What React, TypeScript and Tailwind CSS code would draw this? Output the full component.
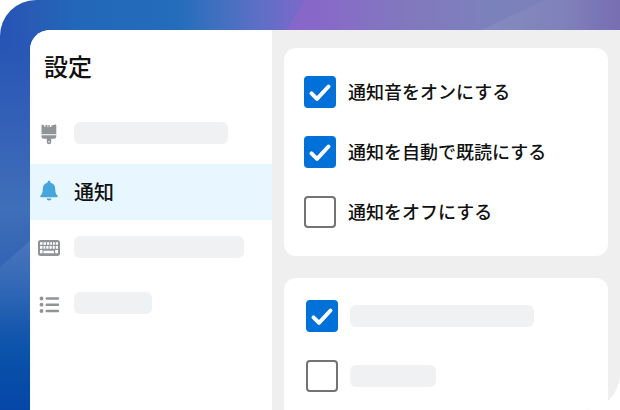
import React from "react";

function Backdrop() {
  return (
    <svg
      className="absolute inset-0 h-full w-full"
      viewBox="0 0 620 410"
      preserveAspectRatio="none"
      aria-hidden="true"
    >
      <defs>
        <linearGradient id="top" x1="0" y1="0" x2="1" y2="0">
          <stop offset="0" stopColor="#2653b6" />
          <stop offset="0.05" stopColor="#295bb6" />
          <stop offset="0.12" stopColor="#2267b8" />
          <stop offset="0.29" stopColor="#246dbb" />
          <stop offset="0.35" stopColor="#4070c0" />
          <stop offset="0.42" stopColor="#5e6fc6" />
          <stop offset="0.49" stopColor="#7c69c8" />
          <stop offset="0.56" stopColor="#8370c5" />
          <stop offset="0.66" stopColor="#8278be" />
          <stop offset="0.8" stopColor="#7b82bb" />
          <stop offset="0.91" stopColor="#7d7fb9" />
          <stop offset="1" stopColor="#786eb2" />
        </linearGradient>
        <linearGradient id="side" x1="0" y1="30" x2="0" y2="410" gradientUnits="userSpaceOnUse">
          <stop offset="0" stopColor="#2855b6" stopOpacity="0" />
          <stop offset="0.07" stopColor="#2957b6" />
          <stop offset="0.3" stopColor="#3764b7" />
          <stop offset="0.47" stopColor="#406fb9" />
          <stop offset="0.6" stopColor="#3365b5" />
          <stop offset="0.7" stopColor="#2560b2" />
          <stop offset="0.85" stopColor="#0a52aa" />
          <stop offset="1" stopColor="#0546a6" />
        </linearGradient>
        <linearGradient id="glow" x1="0" y1="240" x2="0" y2="330" gradientUnits="userSpaceOnUse">
          <stop offset="0" stopColor="#ffffff" stopOpacity="0.09" />
          <stop offset="1" stopColor="#ffffff" stopOpacity="0" />
        </linearGradient>
        <linearGradient id="pink" x1="286" y1="0" x2="390" y2="0" gradientUnits="userSpaceOnUse">
          <stop offset="0" stopColor="#9864cc" stopOpacity="0.5" />
          <stop offset="0.4" stopColor="#9464c8" stopOpacity="0.35" />
          <stop offset="1" stopColor="#8a6cc4" stopOpacity="0" />
        </linearGradient>
        <linearGradient id="beam" x1="482" y1="0" x2="600" y2="0" gradientUnits="userSpaceOnUse">
          <stop offset="0" stopColor="#ffffff" stopOpacity="0.07" />
          <stop offset="1" stopColor="#ffffff" stopOpacity="0" />
        </linearGradient>
      </defs>
      <rect width="620" height="60" fill="url(#top)" />
      <rect y="30" width="60" height="380" fill="url(#side)" />
      <path d="M0 267L30 241V340H0Z" fill="url(#glow)" />
      <path d="M286 30L306 0H390V30Z" fill="url(#pink)" />
      <path d="M482 30L545 0H620V30Z" fill="url(#beam)" />
    </svg>
  );
}

function BrushIcon() {
  return (
    <svg className="size-6 shrink-0" viewBox="0 0 24 24" fill="#909498" aria-hidden="true">
      <path d="M4.500 4.200c0-.5.4-.7.800-.5l2.200.9v1.300h1V4h2v2.300h.8V4h1.500v2h1.200l.6-1.400 3.800-1.100c.5-.1.900.1.900.6v9.100H4.500z" />
      <path d="M4.500 14.200h14.800v1.300a2.200 2.200 0 0 1-2.200 2.200h-2.900v3.300a2.200 2.200 0 0 1-4.400 0v-3.300H6.700a2.200 2.200 0 0 1-2.200-2.200z" />
      <circle cx="12" cy="20.800" r="0.800" fill="#fff" />
    </svg>
  );
}

function BellIcon() {
  return (
    <svg className="size-6 shrink-0" viewBox="0 0 24 24" fill="#45a5dc" aria-hidden="true">
      <path d="M12 .8c.9 0 1.500.6 1.500 1.500v.5c2.900.6 4.700 3 4.700 5.900 0 4 .8 5.400 2.200 6.700.7.700.3 1.800-.7 1.800H4.300c-1 0-1.400-1.100-.7-1.800 1.400-1.300 2.200-2.700 2.200-6.700 0-2.900 1.800-5.300 4.700-5.900v-.5c0-.9.6-1.500 1.500-1.500z" />
      <path d="M9.600 18.500h4.800a2.400 2 0 0 1-4.800 0z" />
    </svg>
  );
}

function KeyboardIcon() {
  return (
    <svg className="size-6 shrink-0" viewBox="0 0 24 24" fill="#909498" aria-hidden="true">
      <rect x="1" y="5" width="22" height="16" rx="2.500" />
      <g fill="#fff">
        <path d="M3 7.200h2.500v2.500H3zM6.500 7.200H9v2.500H6.500zM10 7.200h2.200v2.500H10zM13.200 7.200h1.800v2.500h-1.800zM16 7.200h1.800v2.500H16zM18.800 7.200H21v2.500h-2.200z" />
        <path d="M3 11h2.500v2.700H3zM6.500 11h1.800v2.700H6.500zM9.300 11h2.200v2.700H9.300zM12.500 11h2.200v2.700h-2.200zM15.700 11h2.100v2.700h-2.100zM18.800 11H21v2.700h-2.200z" />
        <path d="M3 15h2.500v3.200H3zM6.500 15.800h10.500v2.400H6.500zM18.200 15H21v3.200h-2.800z" />
      </g>
    </svg>
  );
}

function ListIcon() {
  return (
    <svg className="size-6 shrink-0" viewBox="0 0 24 24" fill="#909498" aria-hidden="true">
      <circle cx="4.500" cy="7.500" r="1.900" />
      <circle cx="4.500" cy="13.700" r="1.900" />
      <circle cx="4.500" cy="20" r="1.900" />
      <path
        d="M9.700 7.500H21M9.700 13.700H21M9.700 20H21"
        stroke="#909498"
        strokeWidth="2.400"
        strokeLinecap="round"
      />
    </svg>
  );
}

function Skeleton({ className }: { className: string }) {
  return <span className={`block h-[22px] rounded-md bg-[#eff1f3] ${className}`} />;
}

function NavItem({
  icon,
  label,
  children,
  className = "pb-0.5",
}: {
  icon: React.ReactNode;
  label?: string;
  children: React.ReactNode;
  className?: string;
}) {
  return (
    <li>
      <button
        type="button"
        aria-label={label}
        className={`flex h-14 w-full items-center gap-[13px] pl-[7px] text-left text-xl font-medium ${className}`}
      >
        {icon}
        <span>{children}</span>
      </button>
    </li>
  );
}

function CheckRow({
  checked = false,
  text,
  label,
  children,
}: {
  checked?: boolean;
  text?: string;
  label?: string;
  children?: React.ReactNode;
}) {
  return (
    <label className="flex items-center gap-3 text-lg leading-7 font-medium">
      <span className="relative size-8 shrink-0">
        <input
          type="checkbox"
          defaultChecked={checked}
          aria-label={label}
          className="peer block size-8 appearance-none rounded border-2 border-[#737373] bg-white checked:border-[#0071d8] checked:bg-[#0071d8]"
        />
        <svg
          className="pointer-events-none absolute inset-0 hidden size-8 peer-checked:block"
          viewBox="0 0 32 32"
          fill="none"
          stroke="#fff"
          strokeWidth="4"
          strokeLinecap="round"
          strokeLinejoin="round"
          aria-hidden="true"
        >
          <path d="M7.500 17.300L13 22.800L24.500 10.500" />
        </svg>
      </span>
      {text && <span className="pb-0.5">{text}</span>}
      {children}
    </label>
  );
}

export default function App() {
  return (
    <div className="bg-white font-['Noto_Sans_CJK_JP',sans-serif] text-[#111]">
      <div className="relative flex h-screen overflow-hidden rounded-tl-[36px] rounded-br-[36px] pt-[30px] pl-[30px]">
        <Backdrop />
        <div className="relative flex min-w-0 flex-1 overflow-hidden rounded-tl-[20px] bg-[#efefef]">
          <aside className="w-[242px] shrink-0 bg-white pt-5">
            <h1 className="pl-3.5 text-2xl font-medium">設定</h1>
            <nav className="pt-6">
              <ul>
                <NavItem icon={<BrushIcon />} label="テーマ" className="mb-0.5 pb-0.5">
                  <Skeleton className="w-[154px]" />
                </NavItem>
                <NavItem icon={<BellIcon />} className="bg-[#e8f7ff]">
                  通知
                </NavItem>
                <NavItem icon={<KeyboardIcon />} label="キーボード">
                  <Skeleton className="w-[170px]" />
                </NavItem>
                <NavItem icon={<ListIcon />} label="リスト">
                  <Skeleton className="w-[78px]" />
                </NavItem>
              </ul>
            </nav>
          </aside>
          <main className="flex min-w-0 flex-1 flex-col gap-[22px] px-3 pt-[18px]">
            <section className="flex flex-col gap-7 rounded-xl bg-white px-5 py-7">
              <CheckRow checked text="通知音をオンにする" />
              <CheckRow checked text="通知を自動で既読にする" />
              <CheckRow text="通知をオフにする" />
            </section>
            <section className="flex flex-1 flex-col gap-7 rounded-t-xl bg-white px-[22px] pt-[22px]">
              <CheckRow checked label="オプション 1">
                <Skeleton className="w-[184px]" />
              </CheckRow>
              <CheckRow label="オプション 2">
                <Skeleton className="w-[86px]" />
              </CheckRow>
            </section>
          </main>
        </div>
      </div>
    </div>
  );
}
